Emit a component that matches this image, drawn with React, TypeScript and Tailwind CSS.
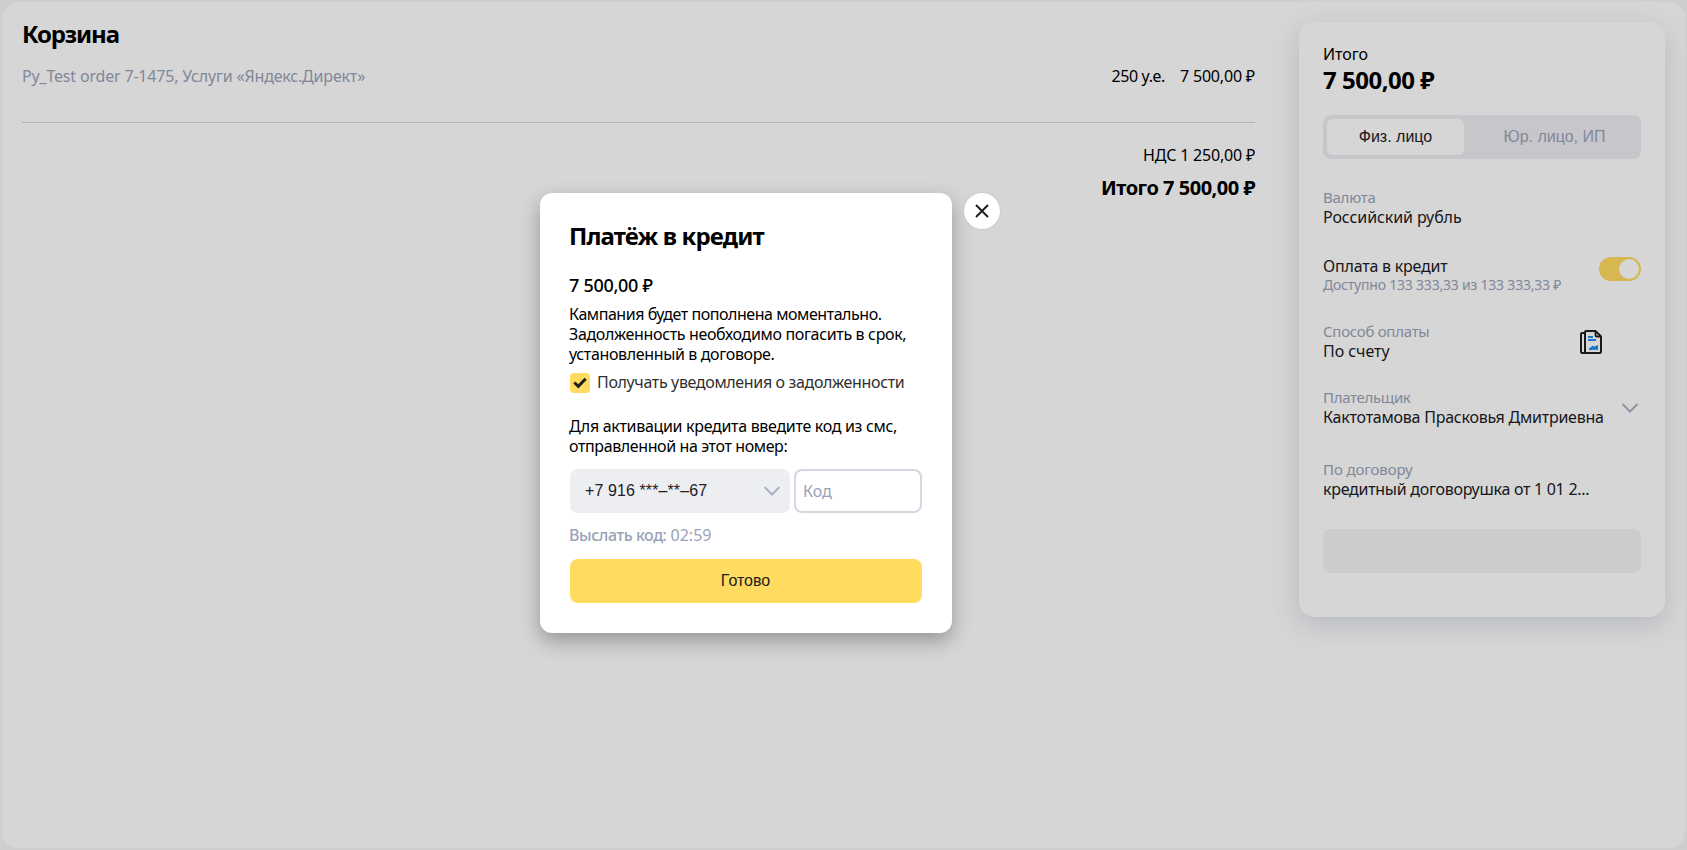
import type { ReactNode } from "react";

const NOTO = "font-['Noto_Sans',sans-serif]";
const ARIAL = "font-['Liberation_Sans',Arial,sans-serif]";

function Line({ className = "", children }: { className?: string; children: ReactNode }) {
  return <div className={`whitespace-pre ${className}`}>{children}</div>;
}

function Chevron({ className = "" }: { className?: string }) {
  return (
    <svg className={className} width="18" height="12" viewBox="0 0 18 12" fill="none">
      <path d="M1.5 2 9 9.5 16.5 2" stroke="#abb1c8" strokeWidth="2" />
    </svg>
  );
}

function InvoiceIcon() {
  return (
    <svg width="22" height="24" viewBox="0 0 22 24" fill="none">
      <path d="M5 3H2.2Q1 3 1 4.200V21.800Q1 23 2.200 23H19.800Q21 23 21 21.800V6.500L15.500 1H6.200Q5 1 5 2.200V23" stroke="#21201f" strokeWidth="2" />
      <path d="M15.500 1V5.200Q15.500 6.500 16.800 6.500H21" stroke="#21201f" strokeWidth="1.800" />
      <path d="M8 6h5v2H8zM8 9h8v2H8z" fill="#1f8af5" />
      <path d="M9 20v-1.500l4-3 .8 1.200L18 15v5h-2l-.3-1-1 1h-1.700l-.3-.6-1 .6z" fill="#1f8af5" />
    </svg>
  );
}

function Field({ label, value, labelClass, valueClass }: { label: string; value: string; labelClass: string; valueClass: string }) {
  return (
    <div>
      <Line className={`text-[15px] leading-5 text-[#9aa2b8] ${labelClass}`}>{label}</Line>
      <Line className={`text-base leading-5 text-[#21201f] ${valueClass}`}>{value}</Line>
    </div>
  );
}

function Cart() {
  return (
    <main className="w-[1233px] shrink-0 pt-[18px]">
      <h1 className="text-[24px] font-bold leading-7 tracking-[-1.15px]">Корзина</h1>
      <div className="mt-[18px] flex h-[57px] justify-between border-b border-[#d5d5e2] text-base leading-5">
        <Line className="tracking-[-0.18px] text-[#9aa2b8]">Py_Test order 7-1475, Услуги «Яндекс.Директ»</Line>
        <div className="flex gap-[15px]">
          <Line className="tracking-[-0.38px]">250 у.е.</Line>
          <Line className="tracking-[-0.18px]">7 500,00 ₽</Line>
        </div>
      </div>
      <div className="mt-[22px] flex flex-col items-end">
        <Line className="text-base leading-5 tracking-[-0.2px]">НДС 1 250,00 ₽</Line>
        <Line className="mt-[11px] text-[20px] font-bold leading-6 tracking-[-0.48px]">Итого 7 500,00 ₽</Line>
      </div>
    </main>
  );
}

function Summary() {
  return (
    <aside className="mt-5 h-[595px] w-[366px] shrink-0 rounded-2xl bg-white px-6 pt-[22px] shadow-[0_8px_28px_rgba(60,80,110,0.2)]">
      <Line className="text-base leading-5 tracking-[-0.04px]">Итого</Line>
      <Line className="mt-0.5 text-[24px] font-bold leading-7 tracking-[-0.5px]">7 500,00 ₽</Line>

      <div className={`mt-[21px] flex h-11 rounded-lg bg-[#edeef2] p-1 text-base ${ARIAL}`}>
        <button className="w-[137px] rounded-md bg-white text-[#21201f]">Физ. лицо</button>
        <button className="flex-1 pl-2 text-[#9aa2b8]">Юр. лицо, ИП</button>
      </div>

      <div className="mt-7">
        <Field label="Валюта" value="Российский рубль" labelClass="tracking-[-0.25px]" valueClass="tracking-[-0.09px]" />
      </div>

      <div className="mt-[29px] flex justify-between">
        <div>
          <Line className="text-base leading-5 tracking-[-0.21px] text-[#21201f]">Оплата в кредит</Line>
          <Line className="text-[14px] leading-[18px] tracking-[-0.21px] text-[#9aa2b8]">Доступно 133 333,33 из 133 333,33 ₽</Line>
        </div>
        <div className="mt-px flex h-6 w-[42px] items-center justify-end rounded-full bg-[#ffdb60] pr-0.5">
          <div className="size-5 rounded-full bg-white" />
        </div>
      </div>

      <div className="mt-[27px] flex justify-between pr-[39px]">
        <Field label="Способ оплаты" value="По счету" labelClass="tracking-[-0.27px]" valueClass="tracking-[-0.06px]" />
        <div className="pt-[9px]">
          <InvoiceIcon />
        </div>
      </div>

      <div className="mt-[26px] flex justify-between">
        <Field label="Плательщик" value="Кактотамова Прасковья Дмитриевна" labelClass="tracking-[-0.33px]" valueClass="tracking-[-0.24px]" />
        <Chevron className="mr-0.5 mt-[15px]" />
      </div>

      <div className="mt-8">
        <Field label="По договору" value="кредитный договорушка от 1 01 2..." labelClass="tracking-[-0.12px]" valueClass="tracking-[-0.28px]" />
      </div>

      <button className={`mt-[30px] h-11 w-full rounded-lg bg-[#f2f3f5] text-base text-[#f6f7f9] ${ARIAL}`}>Ввести промокод</button>
    </aside>
  );
}

function CreditDialog() {
  return (
    <div className="flex gap-3">
      <section className="h-[440px] w-[412px] rounded-xl bg-white px-[30px] pt-[29px] shadow-[0_8px_20px_rgba(0,0,0,0.3)]">
        <h2 className="-ml-px whitespace-pre text-[24px] font-bold leading-7 tracking-[-0.86px]">Платёж в кредит</h2>
        <Line className="-ml-px mt-[23px] text-[18px] font-medium leading-6 tracking-[-0.28px]">7 500,00 ₽</Line>
        <div className="-ml-px mt-[7px] text-base leading-5">
          <Line className="tracking-[-0.45px]">Кампания будет пополнена моментально.</Line>
          <Line className="tracking-[-0.34px]">Задолженность необходимо погасить в срок,</Line>
          <Line className="tracking-[-0.36px]">установленный в договоре.</Line>
        </div>
        <label className="mt-2 flex h-[22px] gap-[7px]">
          <span className="mt-px flex size-5 items-center justify-center rounded bg-[#ffdb60]">
            <svg width="14" height="12" viewBox="0 0 14 12" fill="none">
              <path d="M1.300 5.500 5.300 9.300 12.700 1.800" stroke="#21201f" strokeWidth="3" />
            </svg>
          </span>
          <Line className="text-base leading-5 tracking-[-0.35px] text-[#30302f]">Получать уведомления о задолженности</Line>
        </label>
        <div className="-ml-px mt-[22px] text-base leading-5">
          <Line className="tracking-[-0.31px]">Для активации кредита введите код из смс,</Line>
          <Line className="tracking-[-0.39px]">отправленной на этот номер:</Line>
        </div>
        <div className="mt-[13px] flex h-11 gap-1">
          <button className={`flex w-[220px] items-center justify-between rounded-lg bg-[#edeef2] pl-[15px] pr-[9px] text-base text-[#21201f] ${ARIAL}`}>
            <span className="whitespace-pre tracking-[0.1px]">+7 916 ***–**–67</span>
            <Chevron />
          </button>
          <div className="flex flex-1 items-center rounded-lg border-2 border-[#d4d7e2] pl-[7px] text-base text-[#9aa2b8]">Код</div>
        </div>
        <div className="-ml-px mt-3 flex gap-1 text-base leading-5 text-[#9aa2b8]">
          <Line className="font-medium tracking-[-0.42px]">Выслать код:</Line>
          <Line>02:59</Line>
        </div>
        <button className={`mt-3.5 h-11 w-full rounded-lg bg-[#ffdb60] pr-px text-base text-[#21201f] ${ARIAL}`}>Готово</button>
      </section>
      <button className="flex size-9 items-center justify-center rounded-full bg-white shadow-[0_0_2px_rgba(0,0,0,0.15)]">
        <svg width="14" height="14" viewBox="0 0 14 14" fill="none">
          <path d="M1 1 13 13M13 1 1 13" stroke="#21201f" strokeWidth="2" />
        </svg>
      </button>
    </div>
  );
}

export default function App() {
  return (
    <div className={`relative h-[850px] w-[1687px] overflow-hidden bg-[#f5f6f8] p-0.5 text-black ${NOTO}`}>
      <div className="flex h-full gap-11 overflow-hidden rounded-2xl bg-white pl-5">
        <Cart />
        <Summary />
      </div>
      <div className="absolute inset-0 bg-black/16 pl-[540px] pt-[193px]">
        <CreditDialog />
      </div>
    </div>
  );
}
